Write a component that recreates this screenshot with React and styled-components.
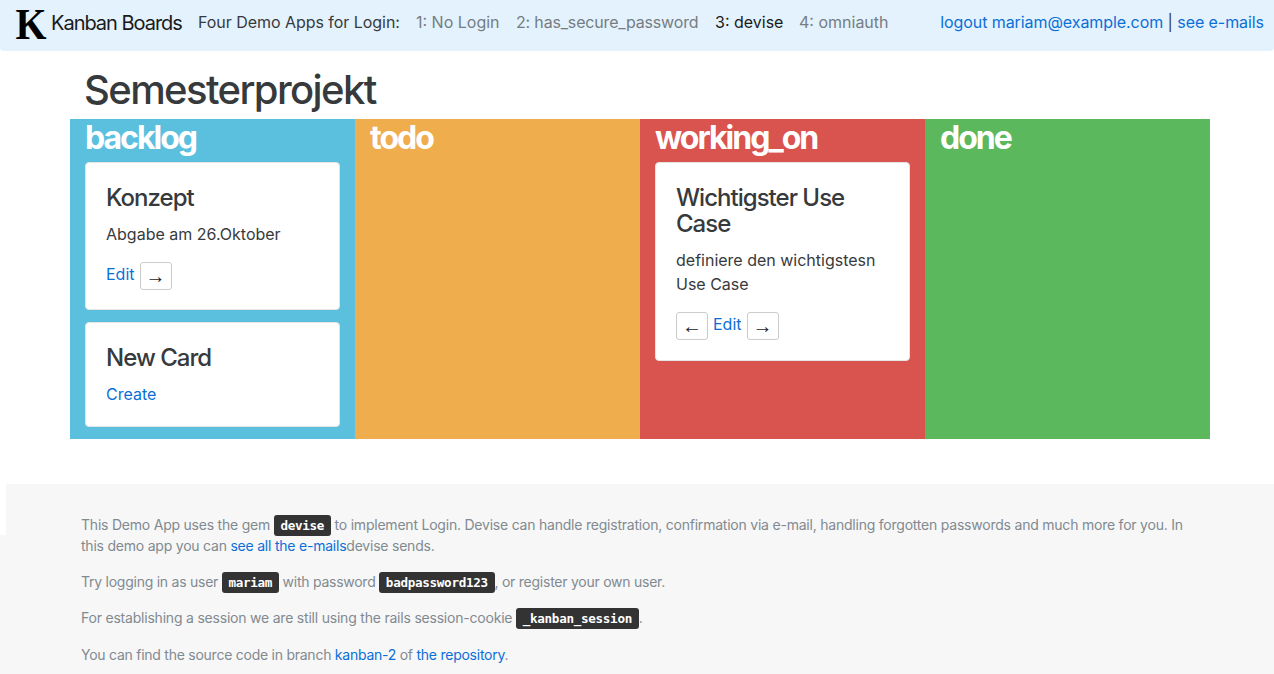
import React from 'react';
import styled, { createGlobalStyle } from 'styled-components';

const sans = "Inter, 'Liberation Sans', sans-serif";

const GlobalStyle = createGlobalStyle`
  *, *::before, *::after { box-sizing: border-box; }
  html { height: 674px; overflow: hidden; }
  body {
    margin: 0;
    height: 674px;
    overflow: hidden;
    background: #fff;
    color: #373a3c;
    font: 400 16px/24px ${sans};
  }
  h1, h2, h4, p { margin: 0; }
`;

const Link = styled.a`
  color: #0b6fd8;
  text-decoration: none;
`;

const Navbar = styled.nav`
  display: flex;
  align-items: center;
  height: 51px;
  padding: 0 10px 8px 15px;
  background: #e3f2fd;
  border-radius: 0 0 4px 4px;
  white-space: nowrap;
`;

const Logo = styled.svg`
  flex: none;
  overflow: visible;
  width: 32px;
  height: 32px;
  margin: 5px 4px 0 0;
`;

const Brand = styled.span`
  width: 147px;
  padding-top: 3px;
  color: #1a1a1a;
  font-size: 20px;
  letter-spacing: -1.02px;
`;

const NavText = styled.span`
  width: ${(p) => p.$width}px;
  color: ${(p) => p.$color || '#373a3c'};
  letter-spacing: ${(p) => p.$spacing || 0}px;
`;

const Account = styled.span`
  margin-left: auto;
  letter-spacing: -0.07px;
`;

const Board = styled.main`
  width: 1140px;
  margin: 0 64px 0 70px;
  padding-top: 17px;
`;

const BoardTitle = styled.h1`
  padding-left: 14px;
  margin-bottom: 7px;
  font-size: 40px;
  font-weight: 500;
  line-height: 44px;
  letter-spacing: -1.6px;
`;

const Columns = styled.div`
  display: grid;
  grid-template-columns: repeat(4, 285px);
  height: 320px;
`;

const Column = styled.section`
  padding: 1px 15px 0;
  background: ${(p) => p.$color};
`;

const ColumnTitle = styled.h2`
  margin-bottom: 7px;
  color: #fff;
  font-size: 32px;
  font-weight: 700;
  line-height: 35px;
  letter-spacing: -1.98px;
`;

const Card = styled.article`
  height: ${(p) => p.$height}px;
  margin-bottom: 12px;
  padding: 22px 20px 0;
  background: #fff;
  border: 1px solid #e5e5e5;
  border-radius: 4px;
`;

const CardTitle = styled.h4`
  margin-bottom: 11px;
  font-size: 24px;
  font-weight: 500;
  line-height: 26px;
  letter-spacing: -0.98px;
`;

const CardText = styled.p`
  margin-bottom: 16px;
`;

const Actions = styled.div`
  display: flex;
  gap: 5px;
`;

const MoveButton = styled.button`
  display: flex;
  justify-content: center;
  width: 32px;
  height: 28px;
  padding: 0;
  background: #fff;
  border: 1px solid #ccc;
  border-radius: 3px;
  color: #222;
  font: 20px/26px 'Liberation Serif', serif;
`;

const Footer = styled.footer`
  position: relative;
  height: 190px;
  margin-top: 45px;
  padding: 30px 81px 0;
  background: #f7f7f7;
  color: #818a91;
  font-size: 14px;
  line-height: 21px;

  &::before {
    content: '';
    position: absolute;
    top: 0;
    left: 0;
    width: 6px;
    height: 51px;
    background: #fff;
  }
`;

const Note = styled.p`
  margin-bottom: 15.2px;
  white-space: nowrap;
  letter-spacing: ${(p) => p.$spacing || -0.22}px;
`;

const Code = styled.code`
  padding: 3px 6.7px;
  background: #333;
  border-radius: 3px;
  color: #fff;
  font: 700 12.6px 'DejaVu Sans Mono', monospace;
  letter-spacing: -0.3px;
`;

const apps = [
  { label: '1: No Login', width: 100, color: '#757d83' },
  { label: '2: has_secure_password', width: 199, color: '#757d83', spacing: -0.17 },
  { label: '3: devise', width: 84, color: '#1a1a1a' },
  { label: '4: omniauth', width: 100, color: '#757d83' },
];

const columns = [
  {
    name: 'backlog',
    color: '#5bc0de',
    cards: [
      { title: ['Konzept'], text: ['Abgabe am 26.Oktober'], right: true, height: 148 },
      { title: ['New Card'], create: true, height: 105 },
    ],
  },
  { name: 'todo', color: '#f0ad4e', cards: [] },
  {
    name: 'working_on',
    color: '#d9534f',
    cards: [
      {
        title: ['Wichtigster Use', 'Case'],
        text: ['definiere den wichtigstesn', 'Use Case'],
        left: true,
        right: true,
        height: 199,
      },
    ],
  },
  { name: 'done', color: '#5cb85c', cards: [] },
];

const lines = (parts) =>
  parts.map((part, i) => (
    <React.Fragment key={part}>
      {i > 0 && <br />}
      {part}
    </React.Fragment>
  ));

function BoardCard({ card }) {
  return (
    <Card $height={card.height}>
      <CardTitle>{lines(card.title)}</CardTitle>
      {card.text && <CardText>{lines(card.text)}</CardText>}
      <Actions>
        {card.left && <MoveButton>←</MoveButton>}
        <Link>{card.create ? 'Create' : 'Edit'}</Link>
        {card.right && <MoveButton>→</MoveButton>}
      </Actions>
    </Card>
  );
}

export default function App() {
  return (
    <>
      <GlobalStyle />
      <Navbar>
        <Logo viewBox="0 0 32 32">
          <text x="0.5" y="31" fontSize="45" fontWeight="700" fontFamily="Liberation Serif, serif" textLength="31" lengthAdjust="spacingAndGlyphs" fill="#000">K</text>
        </Logo>
        <Brand>Kanban Boards</Brand>
        <NavText $width={218} $spacing={-0.04}>Four Demo Apps for Login:</NavText>
        {apps.map((app) => (
          <NavText key={app.label} $width={app.width} $color={app.color} $spacing={app.spacing}>{app.label}</NavText>
        ))}
        <Account>
          <Link>logout mariam@example.com</Link> | <Link>see e-mails</Link>
        </Account>
      </Navbar>
      <Board>
        <BoardTitle>Semesterprojekt</BoardTitle>
        <Columns>
          {columns.map((column) => (
            <Column key={column.name} $color={column.color}>
              <ColumnTitle>{column.name}</ColumnTitle>
              {column.cards.map((card) => (
                <BoardCard key={card.title[0]} card={card} />
              ))}
            </Column>
          ))}
        </Columns>
      </Board>
      <Footer>
        <Note>
          This Demo App uses the gem <Code>devise</Code> to implement Login. Devise can handle registration, confirmation via e-mail, handling forgotten passwords and much more for you. In
          <br />
          this demo app you can <Link>see all the e-mails</Link>devise sends.
        </Note>
        <Note $spacing={-0.25}>
          Try logging in as user <Code>mariam</Code> with password <Code>badpassword123</Code>, or register your own user.
        </Note>
        <Note $spacing={-0.21}>
          For establishing a session we are still using the rails session-cookie <Code>_kanban_session</Code>.
        </Note>
        <Note $spacing={-0.25}>
          You can find the source code in branch <Link>kanban-2</Link> of <Link>the repository</Link>.
        </Note>
      </Footer>
    </>
  );
}
